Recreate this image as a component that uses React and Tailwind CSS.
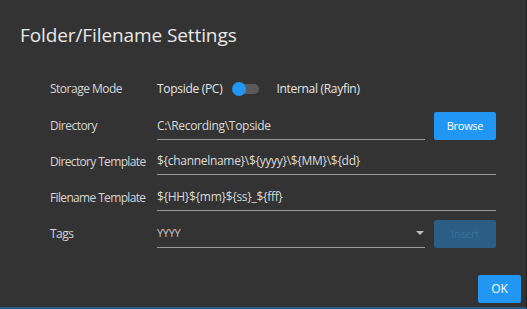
export default function App() {
  const font = { fontFamily: '"Open Sans", "Noto Sans", sans-serif' };
  return (
    <div
      className="relative w-[527px] h-[309px] overflow-hidden bg-[#333333] text-[#d6d6d6] border-r border-r-[#222222] border-b-2 border-b-[#245b86]"
      style={font}
    >
      <h1 className="pl-[20px] pt-[20px] text-[19px] leading-[30px] font-normal text-[#e8e8e8] tracking-[-0.1px]">
        Folder/Filename Settings
      </h1>

      <div className="pl-[50px] pr-[30px] mt-[25px] text-[12px] tracking-[-0.3px]">
        <div className="flex items-center h-[27px]">
          <div className="w-[107px] tracking-[-0.5px]">Storage Mode</div>
          <div className="flex items-center">
            <span className="text-[#e6e6e6]">Topside (PC)</span>
            <div className="relative ml-[10px] w-[27px] h-[14px] flex items-center">
              <div className="absolute left-[7px] w-[20px] h-[10px] rounded-full bg-[#5a5a5a]" />
              <div className="absolute left-0 w-[14px] h-[14px] rounded-full bg-[#2196f3]" />
            </div>
            <span className="ml-[17px] text-[#e6e6e6]">Internal (Rayfin)</span>
          </div>
        </div>

        <div className="flex items-center mt-[10px]">
          <div className="w-[107px] tracking-[-0.5px]">Directory</div>
          <div className="w-[268px] h-[27px] flex items-center border-b border-[#9a9a9a] text-[#dcdcdc]">
            C:\Recording\Topside
          </div>
          <button className="ml-[9px] w-[62px] h-[28px] rounded-[2px] bg-[#2196f3] text-white text-[11px]">
            Browse
          </button>
        </div>

        <div className="flex items-center mt-[8px]">
          <div className="w-[107px] tracking-[-0.65px]">Directory Template</div>
          <div className="w-[339px] h-[27px] flex items-center border-b border-[#9a9a9a] text-[#dcdcdc]">
            {"${channelname}\\${yyyy}\\${MM}\\${dd}"}
          </div>
        </div>

        <div className="flex items-center mt-[9px]">
          <div className="w-[107px] tracking-[-0.65px]">Filename Template</div>
          <div className="w-[339px] h-[27px] flex items-center border-b border-[#9a9a9a] text-[#dcdcdc]">
            {"${HH}${mm}${ss}_${fff}"}
          </div>
        </div>

        <div className="flex items-center mt-[9px]">
          <div className="w-[107px] tracking-[-0.5px]">Tags</div>
          <div className="w-[268px] h-[27px] flex items-center justify-between border-b border-[#9a9a9a] text-[#c8c8c8] text-[11px]">
            <span>YYYY</span>
            <svg width="8" height="5" viewBox="0 0 8 5" className="mr-[1px]">
              <path d="M0 0 L8 0 L4 4 Z" fill="#bdbdbd" />
            </svg>
          </div>
          <button className="ml-[9px] w-[62px] h-[28px] rounded-[2px] bg-[#2b5d85] text-[#3c709a] text-[11px]">
            Insert
          </button>
        </div>
      </div>

      <div className="absolute right-[5px] bottom-[4px]">
        <button className="w-[43px] h-[28px] rounded-[2px] bg-[#2196f3] text-white text-[12px]">
          OK
        </button>
      </div>
    </div>
  );
}
